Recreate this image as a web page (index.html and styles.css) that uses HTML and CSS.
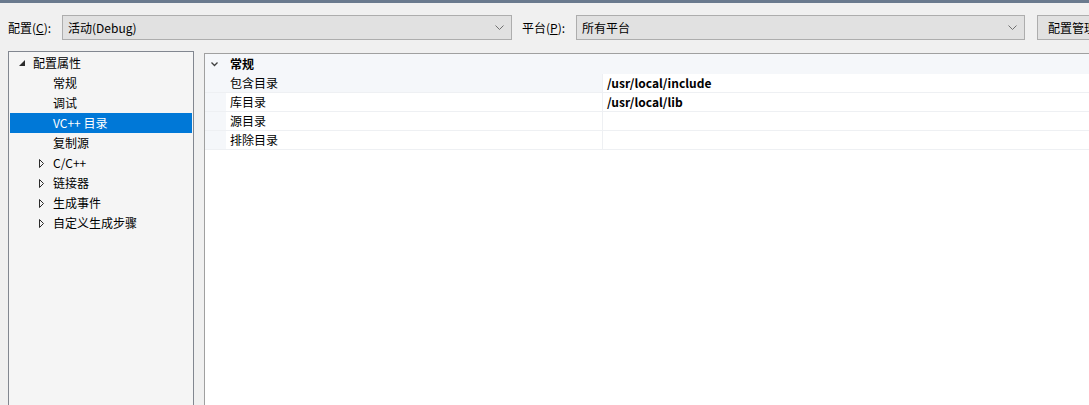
FILE: index.html
```html
<!DOCTYPE html>
<html lang="zh-CN">
<head>
<meta charset="utf-8">
<title>VC++ 目录</title>
<link rel="stylesheet" href="styles.css">
</head>
<body>
<div class="titlebar"></div>
<div class="toolbar">
  <span class="label lbl-config">配置(<u>C</u>):</span>
  <div class="combo combo-config">
    <span class="combo-text">活动(Debug)</span>
    <svg class="chev" width="9" height="5" viewBox="0 0 9 5"><path d="M0.5 0.5 L4.5 4.5 L8.5 0.5" fill="none" stroke="#707070" stroke-width="1"/></svg>
  </div>
  <span class="label lbl-platform">平台(<u>P</u>):</span>
  <div class="combo combo-platform">
    <span class="combo-text">所有平台</span>
    <svg class="chev" width="9" height="5" viewBox="0 0 9 5"><path d="M0.5 0.5 L4.5 4.5 L8.5 0.5" fill="none" stroke="#707070" stroke-width="1"/></svg>
  </div>
  <div class="button">配置管理器(<u>O</u>)...</div>
</div>
<div class="main">
  <div class="tree">
    <div class="node root">
      <span class="twisty"><svg width="6" height="6" viewBox="0 0 6 6"><polygon points="6,0 6,6 0,6" fill="#2b2b2b"/></svg></span>
      <span class="txt">配置属性</span>
    </div>
    <div class="node child"><span class="twisty"></span><span class="txt">常规</span></div>
    <div class="node child"><span class="twisty"></span><span class="txt">调试</span></div>
    <div class="node child selected"><span class="twisty"></span><span class="txt">VC++ 目录</span></div>
    <div class="node child"><span class="twisty"></span><span class="txt">复制源</span></div>
    <div class="node child">
      <span class="twisty"><svg width="5" height="9" viewBox="0 0 5 9"><path d="M0.5 0.5 L4.5 4.5 L0.5 8.5 Z" fill="none" stroke="#2b2b2b" stroke-width="1"/></svg></span>
      <span class="txt">C/C++</span>
    </div>
    <div class="node child">
      <span class="twisty"><svg width="5" height="9" viewBox="0 0 5 9"><path d="M0.5 0.5 L4.5 4.5 L0.5 8.5 Z" fill="none" stroke="#2b2b2b" stroke-width="1"/></svg></span>
      <span class="txt">链接器</span>
    </div>
    <div class="node child">
      <span class="twisty"><svg width="5" height="9" viewBox="0 0 5 9"><path d="M0.5 0.5 L4.5 4.5 L0.5 8.5 Z" fill="none" stroke="#2b2b2b" stroke-width="1"/></svg></span>
      <span class="txt">生成事件</span>
    </div>
    <div class="node child">
      <span class="twisty"><svg width="5" height="9" viewBox="0 0 5 9"><path d="M0.5 0.5 L4.5 4.5 L0.5 8.5 Z" fill="none" stroke="#2b2b2b" stroke-width="1"/></svg></span>
      <span class="txt">自定义生成步骤</span>
    </div>
  </div>
  <div class="grid">
    <div class="category">
      <span class="cat-toggle"><svg width="7" height="5" viewBox="0 0 7 5"><path d="M0.5 0.5 L3.5 3.5 L6.5 0.5" fill="none" stroke="#404040" stroke-width="1.3"/></svg></span>
      <span class="cat-name">常规</span>
    </div>
    <div class="prop active">
      <span class="margin"></span>
      <span class="name">包含目录</span>
      <span class="value">/usr/local/include</span>
    </div>
    <div class="prop">
      <span class="margin"></span>
      <span class="name">库目录</span>
      <span class="value">/usr/local/lib</span>
    </div>
    <div class="prop">
      <span class="margin"></span>
      <span class="name">源目录</span>
      <span class="value"></span>
    </div>
    <div class="prop">
      <span class="margin"></span>
      <span class="name">排除目录</span>
      <span class="value"></span>
    </div>
  </div>
</div>
</body>
</html>
```
FILE: styles.css
```css
html, body {
  margin: 0;
  padding: 0;
  overflow: hidden;
}
body {
  width: 1089px;
  height: 405px;
  background: #f0f0f0;
  font-family: "Noto Sans CJK SC", "Microsoft YaHei", sans-serif;
  font-size: 12px;
  color: #000;
}
u { text-decoration: underline; text-underline-offset: 1px; }

.titlebar {
  height: 3px;
  background: #6a7a8e;
}

.toolbar {
  display: flex;
  align-items: center;
  height: 25px;
  margin-top: 12px;
  padding-left: 8px;
  white-space: nowrap;
  overflow: hidden;
}
.label { flex: none; padding-bottom: 1px; }
.lbl-config { width: 54px; }
.lbl-platform { width: 54px; margin-left: 10px; }

.combo {
  flex: none;
  box-sizing: border-box;
  height: 25px;
  display: flex;
  align-items: center;
  justify-content: space-between;
  background: #e1e1e1;
  border: 1px solid #adadad;
  padding: 0 7px 1px 5px;
}
.combo-config { width: 450px; }
.combo-platform { width: 449px; }
.chev { flex: none; margin-top: 1px; }

.button {
  flex: none;
  box-sizing: border-box;
  height: 25px;
  width: 52px;
  margin-left: 12px;
  padding: 0 0 1px 10px;
  display: flex;
  align-items: center;
  overflow: hidden;
  background: #e1e1e1;
  border: 1px solid #adadad;
  border-right: none;
}

.main {
  display: flex;
  align-items: flex-start;
  margin-top: 11px;
  padding-left: 8px;
}

.tree {
  flex: none;
  box-sizing: border-box;
  width: 186px;
  height: 354px;
  background: #f5f5f5;
  border: 1px solid #828790;
  border-bottom: none;
  padding: 1px;
}
.node {
  height: 20px;
  display: flex;
  align-items: center;
  white-space: nowrap;
}
.node .txt { position: relative; top: -1px; }
.node.root { padding-left: 4px; }
.node.child { padding-left: 24px; }
.twisty {
  flex: none;
  width: 19px;
  height: 20px;
  display: flex;
  align-items: center;
  padding-left: 5px;
  box-sizing: border-box;
}
.node.root .twisty svg { margin-top: 0; }
.node.selected {
  background: #0078d7;
  color: #fff;
}

.grid {
  flex: 1;
  margin-left: 10px;
  margin-right: -20px;
  margin-top: 2px;
  height: 352px;
  background: #fff;
  border-top: 1px solid #a0a0a0;
  border-left: 1px solid #a0a0a0;
}
.category {
  height: 20px;
  display: flex;
  align-items: center;
  background: #f5f7fa;
  font-weight: bold;
}
.cat-toggle {
  flex: none;
  width: 21px;
  height: 20px;
  display: flex;
  align-items: center;
  padding-left: 6px;
  box-sizing: border-box;
}
.cat-name { padding-left: 4px; padding-bottom: 2px; }

.prop {
  display: grid;
  grid-template-columns: 21px 376px 1fr;
  height: 19px;
  box-sizing: border-box;
  border-bottom: 1px solid #eef0f3;
}
.prop > span {
  display: flex;
  align-items: center;
  white-space: nowrap;
  padding-bottom: 1px;
}
.prop .margin { background: #f5f7fa; }
.prop .name { padding-left: 4px; }
.prop .value {
  padding-left: 4px;
  border-left: 1px solid #eef0f3;
  font-weight: bold;
}
.prop.active .name { background: #f5f7fa; }
```
